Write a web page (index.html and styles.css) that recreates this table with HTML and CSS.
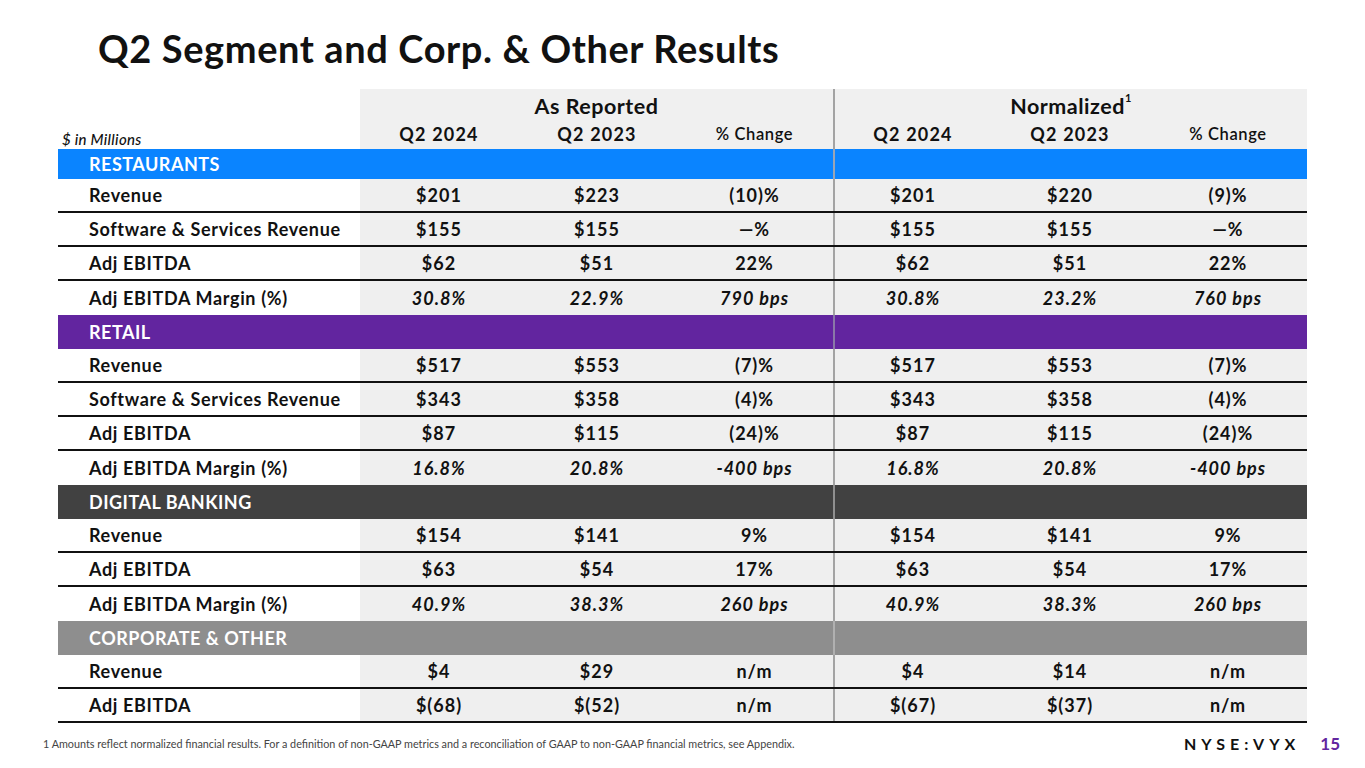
FILE: index.html
```html
<!DOCTYPE html>
<html lang="en">
<head>
<meta charset="utf-8">
<title>Q2 Segment and Corp. &amp; Other Results</title>
<link rel="stylesheet" href="styles.css">
</head>
<body>
<div class="slide">
  <h1 class="title">Q2 Segment and Corp. &amp; Other Results</h1>

  <div class="table">
    <div class="hrow hrow-top">
      <div class="cell label"></div>
      <div class="hcell group">As Reported</div>
      <div class="hcell group divider">Normalized<sup class="sup">1</sup></div>
    </div>
    <div class="hrow hrow-sub">
      <div class="cell label units">$ in Millions</div>
      <div class="hcell sub">Q2 2024</div>
      <div class="hcell sub">Q2 2023</div>
      <div class="hcell sub pct">% Change</div>
      <div class="hcell sub divider">Q2 2024</div>
      <div class="hcell sub">Q2 2023</div>
      <div class="hcell sub pct">% Change</div>
    </div>

    <div class="bar bar-first blue">
      <div class="bar-label">RESTAURANTS</div>
      <div class="bar-rest divider"></div>
    </div>
    <div class="row"><div class="cell label">Revenue</div><div class="cell">$201</div><div class="cell">$223</div><div class="cell">(10)%</div><div class="cell divider">$201</div><div class="cell">$220</div><div class="cell">(9)%</div></div>
    <div class="row"><div class="cell label">Software &amp; Services Revenue</div><div class="cell">$155</div><div class="cell">$155</div><div class="cell">—%</div><div class="cell divider">$155</div><div class="cell">$155</div><div class="cell">—%</div></div>
    <div class="row"><div class="cell label">Adj EBITDA</div><div class="cell">$62</div><div class="cell">$51</div><div class="cell">22%</div><div class="cell divider">$62</div><div class="cell">$51</div><div class="cell">22%</div></div>
    <div class="row last italic"><div class="cell label">Adj EBITDA Margin (%)</div><div class="cell">30.8%</div><div class="cell">22.9%</div><div class="cell">790 bps</div><div class="cell divider">30.8%</div><div class="cell">23.2%</div><div class="cell">760 bps</div></div>

    <div class="bar purple">
      <div class="bar-label">RETAIL</div>
      <div class="bar-rest divider"></div>
    </div>
    <div class="row"><div class="cell label">Revenue</div><div class="cell">$517</div><div class="cell">$553</div><div class="cell">(7)%</div><div class="cell divider">$517</div><div class="cell">$553</div><div class="cell">(7)%</div></div>
    <div class="row"><div class="cell label">Software &amp; Services Revenue</div><div class="cell">$343</div><div class="cell">$358</div><div class="cell">(4)%</div><div class="cell divider">$343</div><div class="cell">$358</div><div class="cell">(4)%</div></div>
    <div class="row"><div class="cell label">Adj EBITDA</div><div class="cell">$87</div><div class="cell">$115</div><div class="cell">(24)%</div><div class="cell divider">$87</div><div class="cell">$115</div><div class="cell">(24)%</div></div>
    <div class="row last italic"><div class="cell label">Adj EBITDA Margin (%)</div><div class="cell">16.8%</div><div class="cell">20.8%</div><div class="cell">-400 bps</div><div class="cell divider">16.8%</div><div class="cell">20.8%</div><div class="cell">-400 bps</div></div>

    <div class="bar dark">
      <div class="bar-label">DIGITAL BANKING</div>
      <div class="bar-rest divider"></div>
    </div>
    <div class="row"><div class="cell label">Revenue</div><div class="cell">$154</div><div class="cell">$141</div><div class="cell">9%</div><div class="cell divider">$154</div><div class="cell">$141</div><div class="cell">9%</div></div>
    <div class="row"><div class="cell label">Adj EBITDA</div><div class="cell">$63</div><div class="cell">$54</div><div class="cell">17%</div><div class="cell divider">$63</div><div class="cell">$54</div><div class="cell">17%</div></div>
    <div class="row last italic"><div class="cell label">Adj EBITDA Margin (%)</div><div class="cell">40.9%</div><div class="cell">38.3%</div><div class="cell">260 bps</div><div class="cell divider">40.9%</div><div class="cell">38.3%</div><div class="cell">260 bps</div></div>

    <div class="bar grey">
      <div class="bar-label">CORPORATE &amp; OTHER</div>
      <div class="bar-rest divider"></div>
    </div>
    <div class="row"><div class="cell label">Revenue</div><div class="cell">$4</div><div class="cell">$29</div><div class="cell">n/m</div><div class="cell divider">$4</div><div class="cell">$14</div><div class="cell">n/m</div></div>
    <div class="row"><div class="cell label">Adj EBITDA</div><div class="cell">$(68)</div><div class="cell">$(52)</div><div class="cell">n/m</div><div class="cell divider">$(67)</div><div class="cell">$(37)</div><div class="cell">n/m</div></div>
  </div>

  <div class="footer">
    <p class="footnote">1 Amounts reflect normalized financial results. For a definition of non-GAAP metrics and a reconciliation of GAAP to non-GAAP financial metrics, see Appendix.</p>
    <div class="brand">
      <span class="ticker">NYSE:VYX</span>
      <span class="page">15</span>
    </div>
  </div>
</div>
</body>
</html>
```

FILE: styles.css
```css
* { box-sizing: border-box; }

html, body {
  margin: 0;
  padding: 0;
  background: #ffffff;
}

body {
  font-family: "Lato", "Open Sans", "DejaVu Sans", sans-serif;
  color: #111111;
}

.slide {
  width: 1365px;
  height: 768px;
  overflow: hidden;
}

.title {
  margin: 26px 0 0 98px;
  font-size: 38px;
  line-height: 44px;
  font-weight: 700;
  color: #111111;
  letter-spacing: 0.6px;
}

.table {
  margin: 19px 0 0 58px;
  width: 1249px;
}

.hrow,
.row {
  display: grid;
  grid-template-columns: 302px 158px 158px 157px 158px 158px 158px;
}

.hrow-top {
  grid-template-columns: 302px 473px 474px;
  height: 31px;
}

.hrow-sub {
  height: 29px;
}

.hcell {
  background: #f0f0f0;
  display: flex;
  align-items: center;
  justify-content: center;
  font-weight: 700;
}

.group {
  font-size: 21.5px;
  letter-spacing: 0.5px;
  padding-top: 3px;
}

.sup {
  font-size: 11px;
  align-self: flex-start;
  line-height: 1;
}

.sub {
  font-size: 18px;
  letter-spacing: 1.2px;
  padding-bottom: 2px;
}

.sub.pct {
  font-size: 16.5px;
  letter-spacing: 0.6px;
  font-weight: 600;
}

.divider {
  border-left: 2px solid #a3a3a3;
}

.cell {
  display: flex;
  align-items: center;
  justify-content: center;
  background: #efefef;
  font-size: 18px;
  letter-spacing: 1px;
  font-weight: 700;
}

.cell.label {
  background: #ffffff;
  justify-content: flex-start;
  padding-left: 31px;
  letter-spacing: 0.65px;
}

.row.italic .cell.label {
  font-style: normal;
}

.cell.label.units {
  padding-left: 4px;
  padding-bottom: 1px;
  align-items: flex-end;
  font-size: 15px;
  font-style: italic;
  font-weight: 500;
  letter-spacing: 0.3px;
}

.row {
  height: 34px;
  border-bottom: 2px solid #111111;
}

.row.last {
  border-bottom: none;
}

.row.italic .cell {
  font-style: italic;
}

.bar {
  display: grid;
  grid-template-columns: 775px 474px;
  height: 34px;
  color: #ffffff;
}

.bar-first {
  height: 30px;
}

.bar-label {
  display: flex;
  align-items: center;
  padding-left: 31px;
  font-size: 18px;
  font-weight: 700;
  letter-spacing: 0.5px;
}

.bar-rest.divider {
  border-left-color: #9aa5b5;
}

.blue { background: #0a84ff; }
.purple { background: #62259f; }
.dark { background: #414141; }
.grey { background: #8e8e8e; }

.purple .bar-rest.divider { border-left-color: #8a78a8; }
.dark .bar-rest.divider { border-left-color: #8f8f8f; }
.grey .bar-rest.divider { border-left-color: #b0b0b0; }

.footer {
  display: flex;
  justify-content: space-between;
  align-items: center;
  margin-top: 10px;
  padding: 0 25px 0 43px;
}

.footnote {
  margin: 0;
  font-size: 10.8px;
  letter-spacing: 0;
  color: #444444;
  font-weight: 400;
}

.brand {
  display: flex;
  align-items: center;
  gap: 20px;
}

.ticker {
  font-size: 16px;
  font-weight: 700;
  letter-spacing: 5px;
  color: #111111;
}

.page {
  font-size: 17px;
  font-weight: 700;
  color: #62259f;
}
```
